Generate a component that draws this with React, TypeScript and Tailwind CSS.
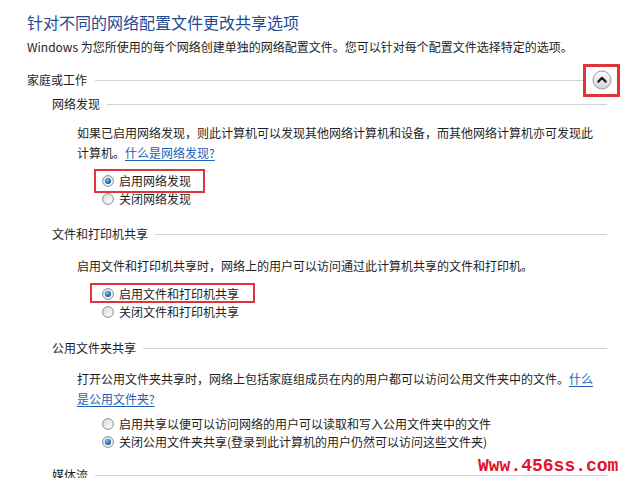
import React from "react";

// Small helpers for the Windows-style sharing panel

function RadioDot({ checked }: { checked?: boolean }) {
  return (
    <svg width="12" height="12" viewBox="0 0 12 12" className="shrink-0">
      <defs>
        <linearGradient id="rb-bg" x1="0" y1="0" x2="1" y2="1">
          <stop offset="0" stopColor="#d9d9d9" />
          <stop offset="1" stopColor="#ffffff" />
        </linearGradient>
        <radialGradient id="rb-dot" cx="0.4" cy="0.35" r="0.7">
          <stop offset="0" stopColor="#8cc4ef" />
          <stop offset="0.6" stopColor="#2d72b8" />
          <stop offset="1" stopColor="#174a86" />
        </radialGradient>
      </defs>
      <circle cx="6" cy="6" r="5.4" fill="url(#rb-bg)" stroke="#8d8e8f" strokeWidth="1" />
      {checked && <circle cx="6" cy="6" r="3" fill="url(#rb-dot)" />}
    </svg>
  );
}

function SubHeader({ label }: { label: string }) {
  return (
    <div className="h-[20px] flex items-center pl-[52px] pr-[13px]">
      <span className="text-[12px] leading-[20px] shrink-0">{label}</span>
      <div className="flex-1 ml-[7px] h-px bg-[#d3d3d3]" />
    </div>
  );
}

function Option({ label, checked, mark }: { label: string; checked?: boolean; mark?: "wide" | "narrow" }) {
  return (
    <div className="relative h-[18px] flex items-center gap-[5px]">
      <RadioDot checked={checked} />
      <span className="text-[12px] leading-[18px] whitespace-nowrap">{label}</span>
      {mark === "narrow" && (
        <div className="absolute left-[-8px] top-[-3px] w-[111px] h-[24px] border-2 border-[#e0343c]" />
      )}
      {mark === "wide" && (
        <div className="absolute left-[-12px] top-[-2px] w-[165px] h-[20px] border-2 border-[#e0343c]" />
      )}
    </div>
  );
}

const Link = ({ children }: { children: React.ReactNode }) => (
  <a className="text-[#1a62b8] underline underline-offset-2 cursor-pointer">{children}</a>
);

export default function App() {
  return (
    <div className="relative w-[620px] h-[478px] overflow-hidden bg-white text-[#1e1e1e] pt-[11px] font-['Noto_Sans_CJK_SC','Microsoft_YaHei',sans-serif]">
      <h1 className="pl-[27px] text-[16px] leading-[22px] text-[#1e4b94]">针对不同的网络配置文件更改共享选项</h1>
      <p className="mt-[4px] pl-[27px] text-[12px] leading-[20px] whitespace-nowrap">
        Windows 为您所使用的每个网络创建单独的网络配置文件。您可以针对每个配置文件选择特定的选项。
      </p>

      {/* Profile header with collapse button */}
      <div className="mt-[13px] h-[20px] flex items-center pl-[27px]">
        <span className="text-[12px] leading-[20px] shrink-0">家庭或工作</span>
        <div className="flex-1 ml-[8px] h-px bg-[#d3d3d3]" />
        <div className="shrink-0 w-[37px] h-[33px] border-[3px] border-[#e0343c] flex items-center justify-center">
          <svg width="20" height="20" viewBox="0 0 20 20">
            <defs>
              <linearGradient id="cb-bg" x1="0" y1="0" x2="0" y2="1">
                <stop offset="0" stopColor="#ffffff" />
                <stop offset="1" stopColor="#d2d2d2" />
              </linearGradient>
            </defs>
            <circle cx="10" cy="10" r="9" fill="url(#cb-bg)" stroke="#9b9b9b" strokeWidth="1" />
            <path d="M6.3 11.6 L10 7.9 L13.7 11.6" fill="none" stroke="#1f1f1f" strokeWidth="2.2" strokeLinecap="round" strokeLinejoin="round" />
          </svg>
        </div>
      </div>

      {/* Network discovery */}
      <div className="mt-[4px]">
        <SubHeader label="网络发现" />
      </div>
      <p className="mt-[9px] pl-[77px] w-[600px] text-[12px] leading-[20px]">
        如果已启用网络发现，则此计算机可以发现其他网络计算机和设备，而其他网络计算机亦可发现此计算机。<Link>什么是网络发现?</Link>
      </p>
      <div className="mt-[9px] pl-[102px] flex flex-col">
        <Option label="启用网络发现" checked mark="narrow" />
        <Option label="关闭网络发现" />
      </div>

      {/* File and printer sharing */}
      <div className="mt-[16px]">
        <SubHeader label="文件和打印机共享" />
      </div>
      <p className="mt-[12px] pl-[77px] w-[600px] text-[12px] leading-[20px]">
        启用文件和打印机共享时，网络上的用户可以访问通过此计算机共享的文件和打印机。
      </p>
      <div className="mt-[9px] pl-[102px] flex flex-col">
        <Option label="启用文件和打印机共享" checked mark="wide" />
        <Option label="关闭文件和打印机共享" />
      </div>

      {/* Public folder sharing */}
      <div className="mt-[17px]">
        <SubHeader label="公用文件夹共享" />
      </div>
      <p className="mt-[11px] pl-[77px] w-[600px] text-[12px] leading-[20px]">
        打开公用文件夹共享时，网络上包括家庭组成员在内的用户都可以访问公用文件夹中的文件。<Link>什么是公用文件夹?</Link>
      </p>
      <div className="mt-[6px] pl-[102px] flex flex-col">
        <Option label="启用共享以便可以访问网络的用户可以读取和写入公用文件夹中的文件" />
        <Option label="关闭公用文件夹共享(登录到此计算机的用户仍然可以访问这些文件夹)" checked />
      </div>

      <div className="mt-[14px]">
        <SubHeader label="媒体流" />
      </div>

      {/* site watermark */}
      <div className="absolute left-[478px] top-[457px] text-[18px] leading-[18px] font-bold text-[#e2122b] font-['Liberation_Mono',monospace]">
        Www.456ss.com
      </div>
    </div>
  );
}
